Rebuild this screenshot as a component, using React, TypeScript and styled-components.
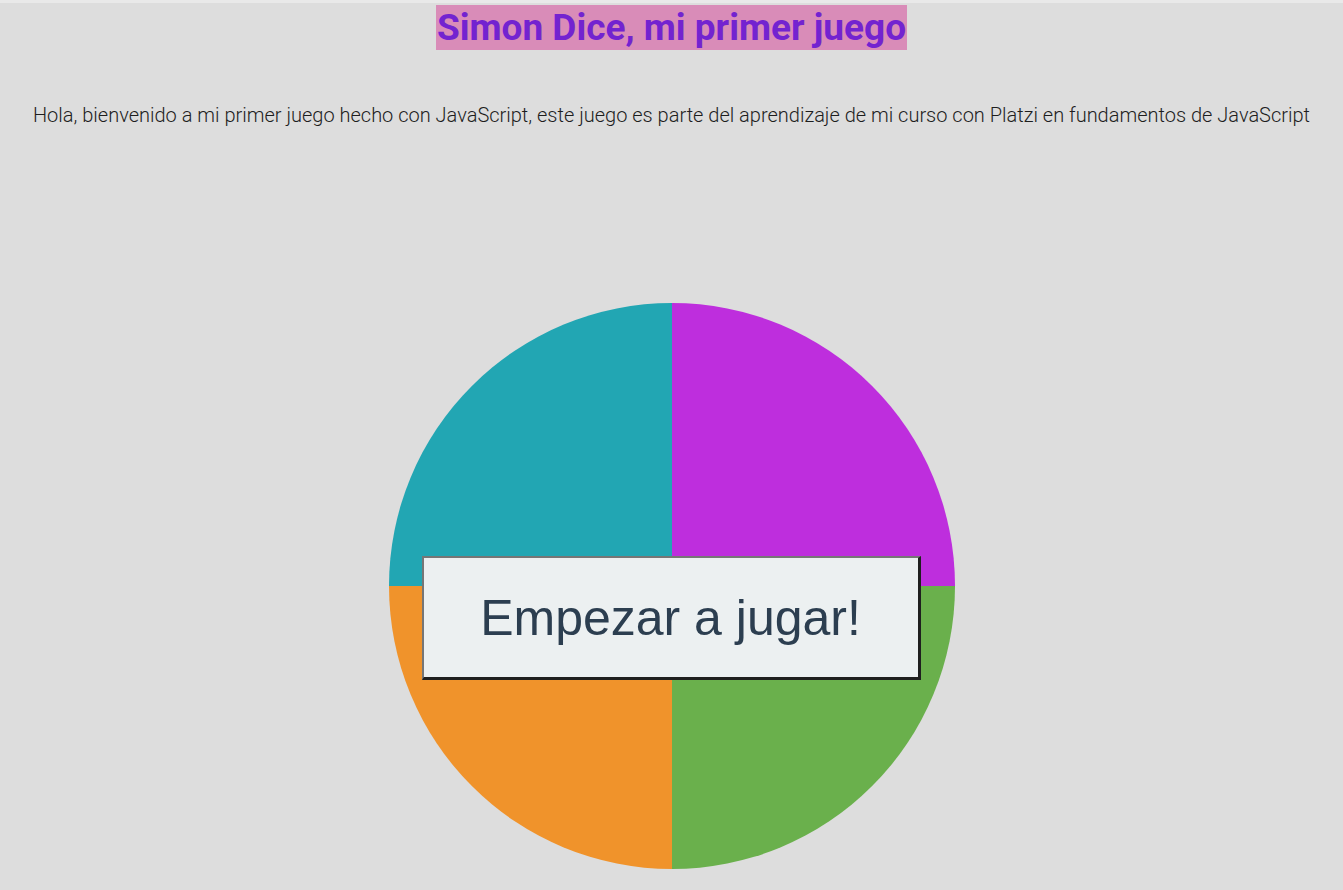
import React from "react";
import styled, { createGlobalStyle } from "styled-components";

const Global = createGlobalStyle`
  html, body { margin: 0; padding: 0; background: #dddddd; }
  body { font-family: Roboto, "Noto Sans", sans-serif; }
`;

const Page = styled.main`
  min-height: 890px;
  box-sizing: border-box;
  border-top: 3px solid #e9e9e9;
  background: #dddddd;
  display: flex;
  flex-direction: column;
  align-items: center;
`;

const Title = styled.h1`
  margin: 2px 0 0;
  padding: 0 1px;
  font-family: Roboto, sans-serif;
  font-weight: 700;
  font-size: 37px;
  line-height: 45px;
  color: #7323d0;
  background: #d98cb8;
`;

const Intro = styled.p`
  margin: 54px 0 0;
  font-family: Roboto, sans-serif;
  font-weight: 300;
  font-size: 20px;
  line-height: 23px;
  color: #1e1e1e;
  text-align: center;
`;

const Board = styled.section`
  position: relative;
  margin-top: 176px;
  width: 566px;
  height: 566px;
`;

const Wheel = styled.div`
  width: 100%;
  height: 100%;
  border-radius: 50%;
  overflow: hidden;
  display: grid;
  grid-template-columns: 1fr 1fr;
  grid-template-rows: 1fr 1fr;
`;

const Pad = styled.div<{ $color: string }>`
  background: ${(p) => p.$color};
`;

const StartButton = styled.button`
  position: absolute;
  left: 33px;
  top: 253px;
  width: 499px;
  height: 124px;
  box-sizing: border-box;
  margin: 0;
  padding: 0;
  background: #ecf0f1;
  color: #2c3e50;
  font-family: "Liberation Sans", Arial, sans-serif;
  font-size: 50px;
  border-style: solid;
  border-width: 2px 3px 3px 2px;
  border-color: #767676 #1f1f1f #1f1f1f #767676;
  cursor: pointer;
`;

export default function App() {
  return (
    <>
      <Global />
      <Page>
        <Title>Simon Dice, mi primer juego</Title>
        <Intro>
          Hola, bienvenido a mi primer juego hecho con JavaScript, este juego es parte del aprendizaje de mi curso con Platzi en fundamentos de JavaScript
        </Intro>
        <Board>
          <Wheel>
            <Pad $color="#22a6b3" />
            <Pad $color="#be2edd" />
            <Pad $color="#f0932b" />
            <Pad $color="#6ab04c" />
          </Wheel>
          <StartButton>Empezar a jugar!</StartButton>
        </Board>
      </Page>
    </>
  );
}
